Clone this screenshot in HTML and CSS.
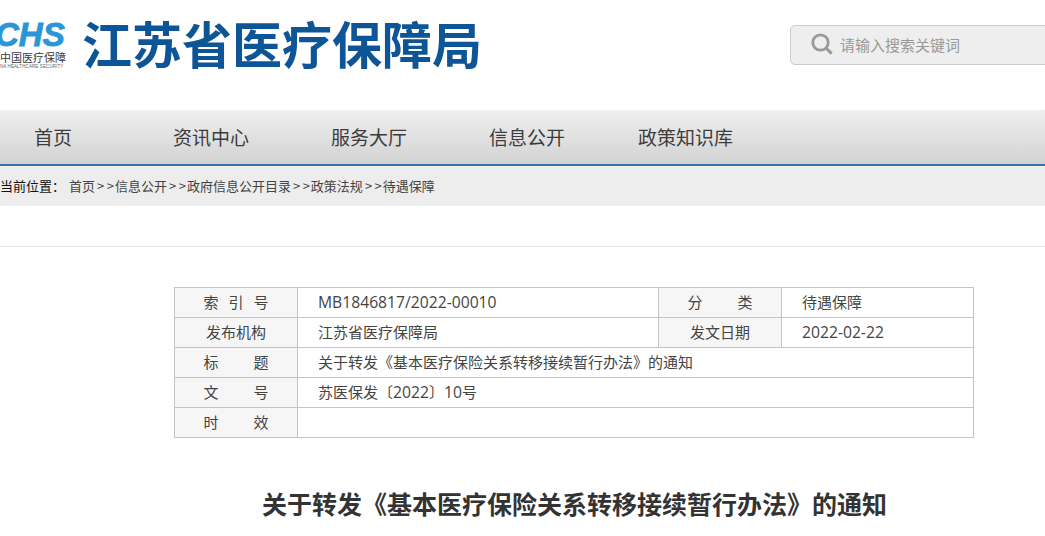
FILE: index.html
```html
<!DOCTYPE html>
<html lang="zh-CN">
<head>
<meta charset="utf-8">
<title>江苏省医疗保障局</title>
<link rel="stylesheet" href="styles.css">
</head>
<body>
<header class="header">
  <div class="logo">
    <div class="logo-mark">CHS</div>
    <div class="logo-cn">中国医疗保障</div>
    <div class="logo-en">NA HEALTHCARE SECURITY</div>
  </div>
  <div class="site-name">江苏省医疗保障局</div>
  <div class="search">
    <svg class="search-icon" width="22" height="22" viewBox="0 0 22 22" aria-hidden="true">
      <circle cx="9.5" cy="9.5" r="7.7" fill="none" stroke="#999" stroke-width="2.8"/>
      <path d="M15 15l5.6 5.6" stroke="#999" stroke-width="3" fill="none"/>
    </svg>
    <span class="search-text">请输入搜索关键词</span>
  </div>
</header>
<nav class="nav">
  <a class="nav-item nav-home">首页</a>
  <a class="nav-item nav-news">资讯中心</a>
  <a class="nav-item nav-service">服务大厅</a>
  <a class="nav-item nav-info">信息公开</a>
  <a class="nav-item nav-policy">政策知识库</a>
</nav>
<div class="crumbs">
  <span class="crumb-label">当前位置：</span>
  <span class="crumb-links">首页<i class="sep">&gt;&gt;</i>信息公开<i class="sep">&gt;&gt;</i>政府信息公开目录<i class="sep">&gt;&gt;</i>政策法规<i class="sep">&gt;&gt;</i>待遇保障</span>
</div>
<div class="divider"></div>
<table class="meta">
  <colgroup>
    <col class="c1"><col class="c2"><col class="c3"><col class="c4">
  </colgroup>
  <tr>
    <th>索<span class="gap-sm"></span>引<span class="gap-sm"></span>号</th><td><span class="lat">MB1846817/2022-00010</span></td>
    <th>分<span class="gap"></span>类</th><td>待遇保障</td>
  </tr>
  <tr>
    <th>发布机构</th><td>江苏省医疗保障局</td>
    <th>发文日期</th><td><span class="lat">2022-02-22</span></td>
  </tr>
  <tr>
    <th>标<span class="gap"></span>题</th><td colspan="3">关于转发《基本医疗保险关系转移接续暂行办法》的通知</td>
  </tr>
  <tr>
    <th>文<span class="gap"></span>号</th><td colspan="3">苏医保发〔<span class="lat">2022</span>〕<span class="lat">10</span>号</td>
  </tr>
  <tr>
    <th>时<span class="gap"></span>效</th><td colspan="3"></td>
  </tr>
</table>
<h1 class="title">关于转发《基本医疗保险关系转移接续暂行办法》的通知</h1>
</body>
</html>
```
FILE: styles.css
```css
* { box-sizing: border-box; }
html, body { margin: 0; padding: 0; overflow: hidden; background: #fff; }
body {
  width: 1045px;
  height: 536px;
  font-family: "Noto Sans CJK SC", "Liberation Sans", sans-serif;
  color: #333;
}
.header {
  height: 110px;
  display: flex;
  align-items: flex-start;
}
.logo {
  width: 66px;
  margin-top: 19px;
  overflow: hidden;
  flex: none;
}
.logo-mark {
  font: italic 700 33px/31px "Liberation Sans", sans-serif;
  -webkit-text-stroke: .9px #2a96d9;
  color: #2a96d9;
  margin-left: -5px;
  white-space: nowrap;
}
.logo-cn {
  font-size: 11px;
  line-height: 14px;
  color: #3c3c3c;
  white-space: nowrap;
}
.logo-en {
  font: 4.5px/6px "Liberation Sans", sans-serif;
  letter-spacing: .1px;
  color: #666;
  white-space: nowrap;
}
.site-name {
  margin-left: 16px;
  margin-top: 6px;
  font-size: 50px;
  line-height: 72px;
  font-weight: 700;
  color: #0d5596;
  white-space: nowrap;
}
.search {
  margin-left: auto;
  margin-top: 25px;
  width: 260px;
  height: 40px;
  margin-right: -5px;
  flex: none;
  display: flex;
  align-items: center;
  padding: 0 0 2px 20px;
  gap: 7px;
  background: #eee;
  border: 1px solid #ccc;
  border-radius: 5px;
}
.search-text { font-size: 15px; color: #999; }
.nav {
  height: 56px;
  display: flex;
  align-items: center;
  background: linear-gradient(#f0f0f0, #d2d2d2);
  border-bottom: 2px solid #3573ab;
}
.nav-item {
  font-size: 19px;
  line-height: 26px;
  color: #3c3c3c;
  white-space: nowrap;
}
.nav-home { margin-left: 34px; }
.nav-news { margin-left: 101px; }
.nav-service { margin-left: 82px; }
.nav-info { margin-left: 82px; }
.nav-policy { margin-left: 73px; }
.crumbs {
  height: 40px;
  display: flex;
  align-items: center;
  padding-bottom: 2px;
  background: #ededed;
  font-size: 13px;
}
.crumb-label { color: #111; width: 69px; flex: none; }
.crumb-links { color: #444; white-space: nowrap; }
.sep { font-style: normal; letter-spacing: 2.5px; margin: 0 -1.5px 0 2px; }
.divider {
  height: 41px;
  border-bottom: 1px solid #e6e6e6;
}
.meta {
  margin: 40px 0 0 174px;
  width: 799px;
  table-layout: fixed;
  border-collapse: collapse;
  font-size: 15px;
  color: #444;
}
.c1 { width: 123px; }
.c2 { width: 361px; }
.c3 { width: 123px; }
.c4 { width: 192px; }
.meta th, .meta td {
  height: 30px;
  padding: 0 0 2px;
  border: 1px solid #c4c4c4;
  font-weight: 400;
  white-space: nowrap;
}
.meta th { background: #f6f6f6; text-align: center; }
.meta td { padding-left: 20px; }
.lat { font-family: "Open Sans", "Liberation Sans", sans-serif; font-size: 15.7px; }
.gap { display: inline-block; width: 35px; }
.gap-sm { display: inline-block; width: 10px; }
.title {
  margin: 47px 0 0 0;
  width: 1149px;
  text-align: center;
  font-size: 25px;
  line-height: 36px;
  font-weight: 700;
  color: #333;
}
```
